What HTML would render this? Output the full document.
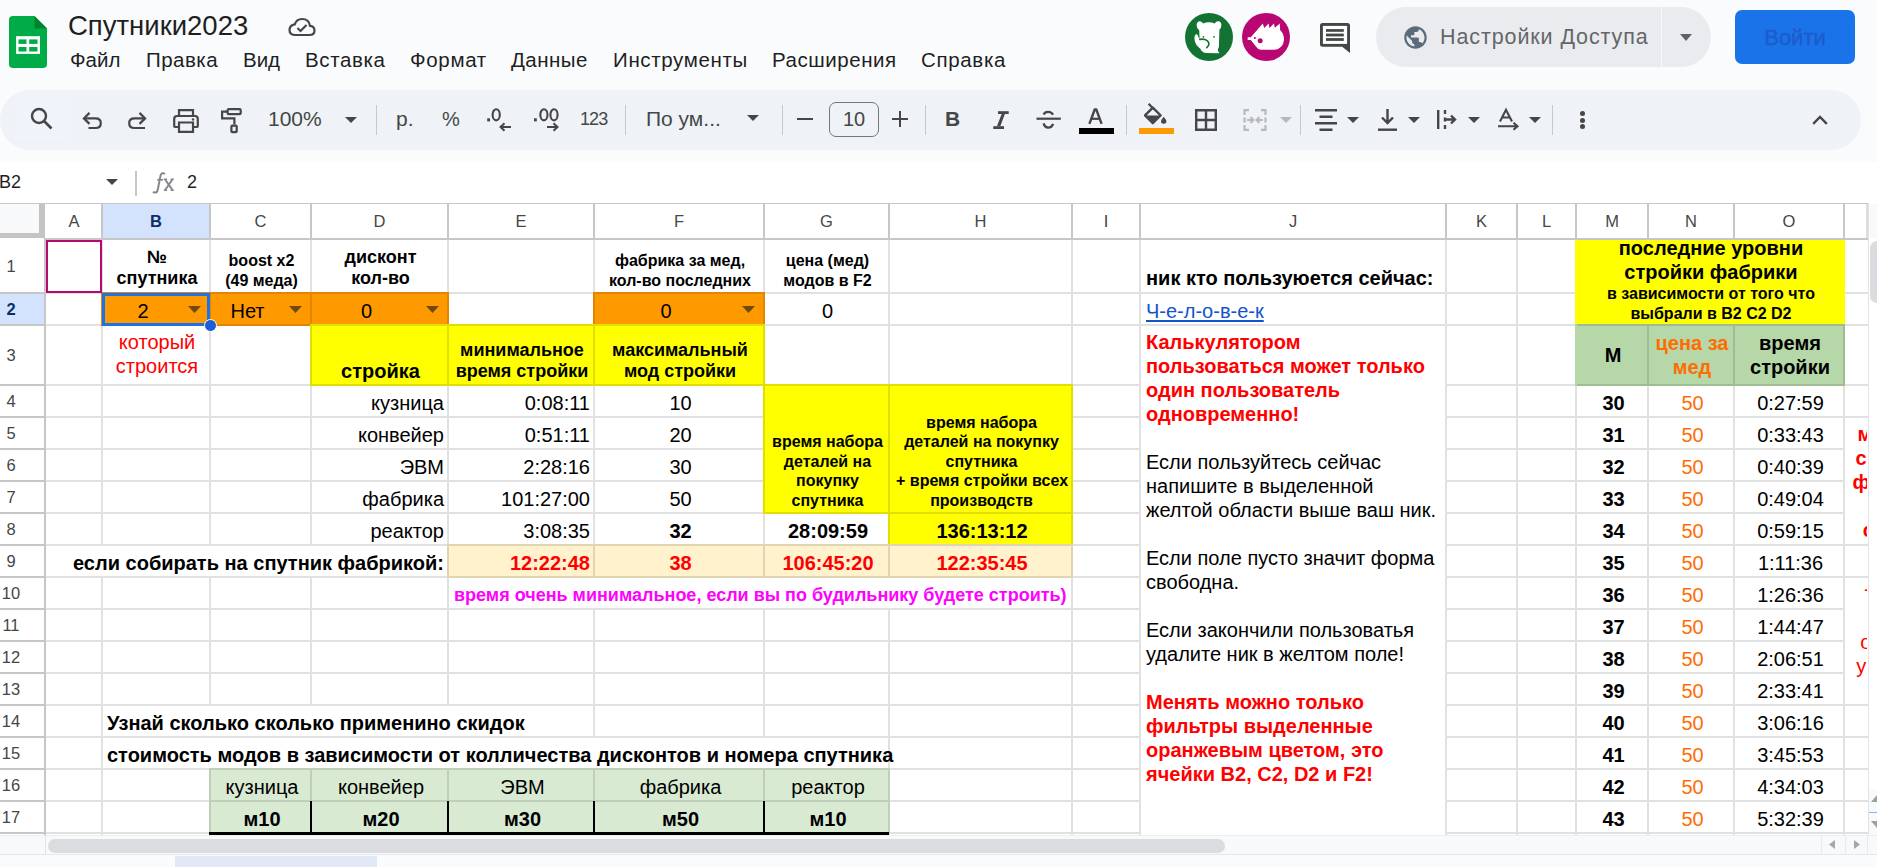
<!DOCTYPE html><html><head><meta charset="utf-8"><style>
html,body{margin:0;padding:0;}body{width:1877px;height:867px;overflow:hidden;position:relative;background:#f9fbfd;font-family:"Liberation Sans",sans-serif;}
div,span{box-sizing:border-box;} svg{position:absolute;display:block;overflow:visible}
.mi{position:absolute;font-size:20.5px;color:#1f1f1f;line-height:24px;top:48px;white-space:nowrap}
.hl{position:absolute;background:#c6c6c6}
</style></head><body>
<svg style="left:9px;top:16px" width="38" height="52" viewBox="0 0 38 52">
<path d="M4 0 H25.5 L38 12.5 V48 Q38 52 34 52 H4 Q0 52 0 48 V4 Q0 0 4 0 Z" fill="#00ac47"/>
<path d="M25.5 0 L38 12.5 H25.5 Z" fill="#00832d"/>
<rect x="7.1" y="20.2" width="23.9" height="17.7" fill="#fff"/>
<rect x="9.5" y="23.4" width="8" height="4.5" fill="#00ac47"/>
<rect x="20.2" y="23.4" width="8.3" height="4.5" fill="#00ac47"/>
<rect x="9.5" y="31" width="8" height="4.5" fill="#00ac47"/>
<rect x="20.2" y="31" width="8.3" height="4.5" fill="#00ac47"/>
</svg>
<div style="position:absolute;left:68px;top:10px;font-size:27.5px;line-height:32px;color:#1f1f1f;white-space:nowrap">Спутники2023</div>
<svg style="left:288px;top:16px" width="28" height="22" viewBox="0 0 28 22">
<path d="M7.5 19 H21.5 Q26.5 19 26.5 14.5 Q26.5 10.3 22 9.8 Q21 3 14 3 Q8.5 3 6.8 8.3 Q1.5 9.3 1.5 14 Q1.5 19 7.5 19 Z" fill="none" stroke="#444746" stroke-width="2.2"/>
<path d="M9.5 12 L12.5 15 L18.5 9" fill="none" stroke="#444746" stroke-width="2.2"/>
</svg>
<div class="mi" style="left:70px;letter-spacing:0px">Файл</div>
<div class="mi" style="left:146px;letter-spacing:0.47px">Правка</div>
<div class="mi" style="left:243px;letter-spacing:0px">Вид</div>
<div class="mi" style="left:305px;letter-spacing:0.63px">Вставка</div>
<div class="mi" style="left:410px;letter-spacing:0.67px">Формат</div>
<div class="mi" style="left:511px;letter-spacing:0.45px">Данные</div>
<div class="mi" style="left:613px;letter-spacing:0.65px">Инструменты</div>
<div class="mi" style="left:772px;letter-spacing:0.55px">Расширения</div>
<div class="mi" style="left:921px;letter-spacing:0.66px">Справка</div>
<svg style="left:1185px;top:13px" width="48" height="48" viewBox="0 0 48 48">
<circle cx="24" cy="24" r="24" fill="#137333"/>
<path d="M21.5 40 Q17 39.8 15.2 35.5 Q10.2 32 9.5 26.5 Q9.2 21.8 11.3 21.2 Q12.6 21 13.2 23.5 Q13.8 25.5 14.6 25.6 L14.2 17.2 Q11.5 15.5 11.6 12 Q12 8.2 15 8.3 Q17.2 8.5 18 10.6 Q24 8 29.8 10.6 Q30.8 8.3 33.2 8.3 Q36.3 8.5 36.4 12 Q36.4 15.2 34.4 16.5 L33.9 34 Q32.3 36.5 33 38 L34.4 40.2 Z" fill="#fff"/>
<path d="M14.8 26.4 Q19 25.3 22.2 27.6 Q25.8 30.8 21.8 34.6" fill="none" stroke="#137333" stroke-width="1.7" stroke-linecap="round"/>
<circle cx="18.5" cy="23.8" r="0.9" fill="#137333"/><circle cx="29" cy="23.8" r="0.9" fill="#137333"/>
</svg>
<svg style="left:1242px;top:13px" width="48" height="48" viewBox="0 0 48 48">
<circle cx="24" cy="24" r="24" fill="#b80672"/>
<path d="M5.7 24.2 L8.8 24.2 L20.8 10.5 L22.2 15 L26.6 10.4 L27.5 15 L31.9 10.4 L32.8 14.8 L37.8 10.4 L38.1 17 Q42 20.5 42 26.5 Q41.5 33.5 36 36 Q35 36.8 31 36.8 L19 36.8 Q16 36.8 14.4 34 L8.8 27 L5.7 27 Z" fill="#fff"/>
<circle cx="18.2" cy="27.8" r="2.5" fill="#b80672"/><circle cx="12.9" cy="25" r="1" fill="#b80672"/>
</svg>
<svg style="left:1319px;top:22px" width="32" height="32" viewBox="0 0 32 32">
<path d="M3.5 1 H28.5 Q31 1 31 3.5 V31 L23.2 24.8 H3.5 Q1 24.8 1 22.3 V3.5 Q1 1 3.5 1 Z" fill="#444746"/>
<rect x="3.9" y="3.9" width="24.2" height="18" fill="#ffffff"/>
<rect x="7" y="7.1" width="17.8" height="2.7" fill="#444746"/><rect x="7" y="11.6" width="17.8" height="2.8" fill="#444746"/><rect x="7" y="16.1" width="17.8" height="2.8" fill="#444746"/>
</svg>
<div style="position:absolute;left:1376px;top:7px;width:335px;height:60px;border-radius:30px;background:#eaebee"></div>
<div style="position:absolute;left:1661px;top:7px;width:1px;height:60px;background:#f6f7f9"></div>
<svg style="left:1401.7px;top:23.7px" width="27" height="27" viewBox="0 0 24 24">
<path d="M12 2C6.48 2 2 6.48 2 12s4.48 10 10 10 10-4.48 10-10S17.52 2 12 2zm-1 17.93c-3.95-.49-7-3.85-7-7.93 0-.62.08-1.21.21-1.79L9 15v1c0 1.1.9 2 2 2v1.93zm6.9-2.54c-.26-.81-1-1.39-1.9-1.39h-1v-3c0-.55-.45-1-1-1H8v-2h2c.55 0 1-.45 1-1V7h2c1.1 0 2-.9 2-2v-.41c2.93 1.19 5 4.06 5 7.41 0 2.08-.8 3.97-2.1 5.39z" fill="#5c6b7a"/>
</svg>
<div style="position:absolute;left:1440px;top:24px;font-size:21.5px;line-height:26px;letter-spacing:0.9px;color:#646669;white-space:nowrap">Настройки Доступа</div>
<svg style="left:1680px;top:34px" width="12" height="7" viewBox="0 0 12 7"><path d="M0 0 H12 L6 7 Z" fill="#5f6368"/></svg>
<div style="position:absolute;left:1735px;top:10px;width:120px;height:54px;border-radius:7px;background:#1a73e8"></div>
<div style="position:absolute;left:1735px;top:25px;width:120px;text-align:center;font-size:22px;font-weight:400;line-height:26px;color:#1d5ccc;-webkit-text-stroke:0.35px #1d5ccc;white-space:nowrap">Войти</div>
<div style="position:absolute;left:0px;top:90px;width:1861px;height:60px;border-radius:30px;background:#eff2f7"></div>
<div style="position:absolute;left:15px;top:98px;width:56px;height:42px;background:#f0f3f9"></div>
<svg style="left:30px;top:107px" width="23" height="23" viewBox="0 0 23 23"><circle cx="9" cy="9" r="7" fill="none" stroke="#444746" stroke-width="2.4"/><path d="M14 14 L21.5 21.5" stroke="#444746" stroke-width="2.6"/></svg>
<svg style="left:82px;top:111px" width="20" height="19" viewBox="0 0 20 19"><path d="M7.5 1.9 L1.9 7.4 L7.5 12.9" fill="none" stroke="#444746" stroke-width="2.2"/><path d="M2 7.4 H13.5 Q18.8 7.4 18.8 12.2 Q18.8 17 13.5 17 H6.5" fill="none" stroke="#444746" stroke-width="2.2"/></svg>
<svg style="left:128px;top:111px" width="20" height="19" viewBox="0 0 20 19"><path d="M11.5 1.9 L17.1 7.4 L11.5 12.9" fill="none" stroke="#444746" stroke-width="2.2"/><path d="M17 7.4 H6.5 Q1.2 7.4 1.2 12.2 Q1.2 17 6.5 17 H17" fill="none" stroke="#444746" stroke-width="2.2"/></svg>
<svg style="left:173px;top:109px" width="26" height="24" viewBox="0 0 26 24"><path d="M6 7 V1.2 H20 V7" fill="none" stroke="#444746" stroke-width="2.2"/><path d="M6 18 H2 Q1.2 18 1.2 17 V10 Q1.2 7 4 7 H22 Q24.8 7 24.8 10 V17 Q24.8 18 24 18 H20" fill="none" stroke="#444746" stroke-width="2.2"/><path d="M6 13.5 H20 V22.8 H6 Z" fill="none" stroke="#444746" stroke-width="2.2"/><circle cx="20" cy="10.5" r="1.2" fill="#444746"/></svg>
<svg style="left:219px;top:107px" width="24" height="27" viewBox="0 0 24 27"><rect x="8.6" y="2.1" width="13.1" height="5.1" rx="1.2" fill="none" stroke="#444746" stroke-width="2.2"/><path d="M8.6 4.6 H3.1 V11.3 H15.4 V17.5" fill="none" stroke="#444746" stroke-width="2.2"/><rect x="12.4" y="18.6" width="5.3" height="6.6" rx="1" fill="none" stroke="#444746" stroke-width="2.2"/></svg>
<div style="position:absolute;left:268px;top:106px;font-size:21px;line-height:26px;color:#444746;white-space:nowrap">100%</div>
<svg style="left:345px;top:117px" width="12" height="6" viewBox="0 0 12 6"><path d="M0 0 H12 L6.0 6 Z" fill="#444746"/></svg>
<div style="position:absolute;left:376px;top:105px;width:1px;height:30px;background:#c7c7c7"></div>
<div style="position:absolute;left:396px;top:106px;font-size:21px;line-height:26px;color:#444746;white-space:nowrap">р.</div>
<div style="position:absolute;left:442px;top:106px;font-size:20px;line-height:26px;color:#444746;white-space:nowrap">%</div>
<svg style="left:486px;top:107px" width="16" height="16" viewBox="0 0 16 16"><rect x="1.2" y="11.3" width="2.8" height="3.1" fill="#444746"/><ellipse cx="10.2" cy="7.8" rx="3.6" ry="5.6" fill="none" stroke="#444746" stroke-width="2.1"/></svg>
<svg style="left:498px;top:122px" width="14" height="10" viewBox="0 0 14 10"><path d="M13 5 H3 M6.5 1.2 L2.5 5 L6.5 8.8" fill="none" stroke="#444746" stroke-width="2"/></svg>
<svg style="left:533px;top:107px" width="26" height="16" viewBox="0 0 26 16"><rect x="1" y="11.3" width="2.8" height="3.1" fill="#444746"/><ellipse cx="10.9" cy="7.8" rx="3.6" ry="5.6" fill="none" stroke="#444746" stroke-width="2.1"/><ellipse cx="21" cy="7.8" rx="3.6" ry="5.6" fill="none" stroke="#444746" stroke-width="2.1"/></svg>
<svg style="left:546px;top:122px" width="14" height="10" viewBox="0 0 14 10"><path d="M1 5 H11 M7.5 1.2 L11.5 5 L7.5 8.8" fill="none" stroke="#444746" stroke-width="2"/></svg>
<div style="position:absolute;left:580px;top:106px;font-size:18px;line-height:26px;color:#444746;white-space:nowrap;letter-spacing:-0.9px">123</div>
<div style="position:absolute;left:625px;top:105px;width:1px;height:30px;background:#c7c7c7"></div>
<div style="position:absolute;left:646px;top:106px;font-size:21px;line-height:26px;color:#444746;white-space:nowrap">По ум...</div>
<svg style="left:747px;top:115px" width="12" height="6" viewBox="0 0 12 6"><path d="M0 0 H12 L6.0 6 Z" fill="#444746"/></svg>
<div style="position:absolute;left:782px;top:105px;width:1px;height:30px;background:#c7c7c7"></div>
<div style="position:absolute;left:797px;top:118px;width:16px;height:2.4px;background:#444746"></div>
<div style="position:absolute;left:829px;top:102px;width:50px;height:35px;border:1.3px solid #747775;border-radius:7px"></div>
<div style="position:absolute;left:829px;top:106px;width:50px;text-align:center;font-size:20px;line-height:26px;color:#444746;white-space:nowrap">10</div>
<div style="position:absolute;left:892px;top:118px;width:16px;height:2.4px;background:#444746"></div>
<div style="position:absolute;left:898.8px;top:111px;width:2.4px;height:16px;background:#444746"></div>
<div style="position:absolute;left:925px;top:105px;width:1px;height:30px;background:#c7c7c7"></div>
<div style="position:absolute;left:945px;top:106px;font-size:21px;font-weight:700;line-height:26px;color:#444746;white-space:nowrap">B</div>
<svg style="left:992px;top:110px" width="18" height="20" viewBox="0 0 18 20"><rect x="6" y="1.2" width="10.7" height="2.8" fill="#444746"/><rect x="1.3" y="16.2" width="10.7" height="2.8" fill="#444746"/><path d="M9.6 3.9 L12.9 3.9 L8.3 16.3 L5 16.3 Z" fill="#444746"/></svg>
<svg style="left:1035px;top:110px" width="27" height="19" viewBox="0 0 27 19"><path d="M1.5 8.7 H25.8" stroke="#444746" stroke-width="2.2"/><path d="M18 4.8 Q16.5 1.9 13.2 1.9 Q9.8 1.9 8.6 4.6" fill="none" stroke="#444746" stroke-width="2.4"/><path d="M8.6 13.4 Q9.8 17.6 13.2 17.6 Q16.8 17.6 18 13.8" fill="none" stroke="#444746" stroke-width="2.4"/></svg>
<svg style="left:1088px;top:108px" width="15" height="16" viewBox="0 0 15 16"><path d="M1.4 15.8 L6.7 1.5 H8.3 L13.6 15.8" fill="none" stroke="#444746" stroke-width="2.4" stroke-linejoin="round"/><path d="M3.8 10.8 H11.2" stroke="#444746" stroke-width="2.2"/></svg>
<div style="position:absolute;left:1079px;top:128px;width:35px;height:6px;background:#000;"></div>
<div style="position:absolute;left:1126px;top:105px;width:1px;height:30px;background:#c7c7c7"></div>
<svg style="left:1144px;top:103px" width="24" height="22" viewBox="0 0 24 22"><path d="M4.6 0.8 L9.5 5.7" stroke="#444746" stroke-width="2.3"/><path d="M8.8 4.6 L16.6 12.4 L8.8 20.2 L1 12.4 Z" fill="none" stroke="#444746" stroke-width="2.3" stroke-linejoin="round"/><path d="M2 12.4 H15.6 L8.8 19.2 Z" fill="#444746"/><path d="M19.7 13.8 Q22.4 17 22.4 18.6 Q22.4 20.8 19.7 20.8 Q17 20.8 17 18.6 Q17 17 19.7 13.8 Z" fill="#444746"/></svg>
<div style="position:absolute;left:1139px;top:128px;width:35px;height:6px;background:#ff9900;"></div>
<svg style="left:1195px;top:109px" width="22" height="22" viewBox="0 0 22 22"><path d="M1.2 1.2 H20.8 V20.8 H1.2 Z M11 1.2 V20.8 M1.2 11 H20.8" fill="none" stroke="#444746" stroke-width="2.4"/></svg>
<svg style="left:1243px;top:109px" width="24" height="22" viewBox="0 0 24 22"><path d="M1.5 6 V1.2 H6 M1.5 16 V20.8 H6 M22.5 6 V1.2 H18 M22.5 16 V20.8 H18" fill="none" stroke="#b7b9bb" stroke-width="2.2"/><path d="M1.5 8.5 V13.5 M22.5 8.5 V13.5" stroke="#b7b9bb" stroke-width="2.2"/><path d="M4 11 H10 M7.5 8 L10.5 11 L7.5 14 M20 11 H14 M16.5 8 L13.5 11 L16.5 14" fill="none" stroke="#b7b9bb" stroke-width="2"/></svg>
<svg style="left:1280px;top:117px" width="12" height="6" viewBox="0 0 12 6"><path d="M0 0 H12 L6.0 6 Z" fill="#b7b9bb"/></svg>
<div style="position:absolute;left:1300px;top:105px;width:1px;height:30px;background:#c7c7c7"></div>
<svg style="left:1315px;top:109px" width="22" height="22" viewBox="0 0 22 22"><path d="M0 1.2 H22 M4.5 7.7 H17.5 M0 14.2 H22 M4.5 20.7 H17.5" stroke="#444746" stroke-width="2.4"/></svg>
<svg style="left:1347px;top:117px" width="12" height="6" viewBox="0 0 12 6"><path d="M0 0 H12 L6.0 6 Z" fill="#444746"/></svg>
<svg style="left:1378px;top:109px" width="19" height="22" viewBox="0 0 19 22"><path d="M9.5 0 V14 M4 8.5 L9.5 14 L15 8.5" fill="none" stroke="#444746" stroke-width="2.4"/><path d="M0 20.7 H19" stroke="#444746" stroke-width="2.4"/></svg>
<svg style="left:1408px;top:117px" width="12" height="6" viewBox="0 0 12 6"><path d="M0 0 H12 L6.0 6 Z" fill="#444746"/></svg>
<svg style="left:1437px;top:110px" width="20" height="19" viewBox="0 0 20 19"><path d="M1.2 0 V19 M8 0 V4 M8 7.5 V11.5 M8 15 V19" stroke="#444746" stroke-width="2.4"/><path d="M8 9.5 H18 M14 5.5 L18 9.5 L14 13.5" fill="none" stroke="#444746" stroke-width="2.4"/></svg>
<svg style="left:1468px;top:117px" width="12" height="6" viewBox="0 0 12 6"><path d="M0 0 H12 L6.0 6 Z" fill="#444746"/></svg>
<svg style="left:1498px;top:109px" width="22" height="22" viewBox="0 0 22 22"><path d="M2 12.5 L8 0.8 L14 12.5 M4.2 8.5 H11.8" fill="none" stroke="#444746" stroke-width="2.1"/><path d="M0 17.3 H19 M15.5 13.8 L19.5 17.3 L15.5 20.8" fill="none" stroke="#444746" stroke-width="2.1"/></svg>
<svg style="left:1529px;top:117px" width="12" height="6" viewBox="0 0 12 6"><path d="M0 0 H12 L6.0 6 Z" fill="#444746"/></svg>
<div style="position:absolute;left:1552px;top:105px;width:1px;height:30px;background:#c7c7c7"></div>
<div style="position:absolute;left:1579.5px;top:110.5px;width:5px;height:5px;border-radius:50%;background:#444746"></div>
<div style="position:absolute;left:1579.5px;top:117.5px;width:5px;height:5px;border-radius:50%;background:#444746"></div>
<div style="position:absolute;left:1579.5px;top:124.0px;width:5px;height:5px;border-radius:50%;background:#444746"></div>
<svg style="left:1812px;top:115px" width="16" height="10" viewBox="0 0 16 10"><path d="M1.2 8.8 L8 2 L14.8 8.8" fill="none" stroke="#444746" stroke-width="2.4"/></svg>
<div style="position:absolute;left:0px;top:162px;width:1877px;height:693px;background:#ffffff;"></div>
<div style="position:absolute;left:-1px;top:169px;font-size:18px;line-height:26px;color:#1f1f1f;white-space:nowrap">B2</div>
<svg style="left:106px;top:179px" width="12" height="6" viewBox="0 0 12 6"><path d="M0 0 H12 L6.0 6 Z" fill="#444746"/></svg>
<div style="position:absolute;left:135px;top:171px;width:2px;height:25px;background:#c7c7c7"></div>
<svg style="left:152px;top:172px" width="23" height="22" viewBox="0 0 23 22"><path d="M12.8 2.2 Q11.8 0.9 10.2 1.3 Q8.7 1.9 8.3 4.5 L5.7 18 Q5.1 20.8 2.9 20.6 Q1.7 20.5 1.1 19.6" fill="none" stroke="#85898d" stroke-width="2"/><path d="M5.2 7.8 H11" stroke="#85898d" stroke-width="1.7"/><path d="M13 7.3 L20.6 18.2 M20.6 7.3 L13 18.2" stroke="#85898d" stroke-width="2"/><path d="M11.8 7.3 H15 M18.6 7.3 H21.8 M11.8 18.2 H15 M18.6 18.2 H21.8" stroke="#85898d" stroke-width="1.5"/></svg>
<div style="position:absolute;left:187px;top:169px;font-size:18px;line-height:26px;color:#1f1f1f;white-space:nowrap">2</div>
<div style="position:absolute;left:0px;top:203px;width:1868px;height:1px;background:#c7c7c7;"></div>
<div style="position:absolute;left:0px;top:204px;width:39px;height:29px;background:#f8f9fa;"></div>
<div style="position:absolute;left:39px;top:204px;width:6px;height:34px;background:#c4c4c4;"></div>
<div style="position:absolute;left:0px;top:233px;width:45px;height:5px;background:#c4c4c4;"></div>
<div style="position:absolute;left:103px;top:204px;width:106px;height:34px;background:#d3e3fd;"></div>
<div style="position:absolute;left:45px;top:238px;width:1823px;height:2px;background:#c7c7c7;"></div>
<div style="position:absolute;left:0px;top:294px;width:44px;height:30px;background:#d3e3fd;"></div>
<div style="position:absolute;left:44px;top:238px;width:2px;height:597px;background:#c7c7c7;"></div>
<div style="position:absolute;left:101px;top:204px;width:2px;height:34px;background:#c7c7c7;"></div>
<div style="position:absolute;left:209px;top:204px;width:2px;height:34px;background:#c7c7c7;"></div>
<div style="position:absolute;left:310px;top:204px;width:2px;height:34px;background:#c7c7c7;"></div>
<div style="position:absolute;left:447px;top:204px;width:2px;height:34px;background:#c7c7c7;"></div>
<div style="position:absolute;left:593px;top:204px;width:2px;height:34px;background:#c7c7c7;"></div>
<div style="position:absolute;left:763px;top:204px;width:2px;height:34px;background:#c7c7c7;"></div>
<div style="position:absolute;left:888px;top:204px;width:2px;height:34px;background:#c7c7c7;"></div>
<div style="position:absolute;left:1071px;top:204px;width:2px;height:34px;background:#c7c7c7;"></div>
<div style="position:absolute;left:1139px;top:204px;width:2px;height:34px;background:#c7c7c7;"></div>
<div style="position:absolute;left:1445px;top:204px;width:2px;height:34px;background:#c7c7c7;"></div>
<div style="position:absolute;left:1516px;top:204px;width:2px;height:34px;background:#c7c7c7;"></div>
<div style="position:absolute;left:1575px;top:204px;width:2px;height:34px;background:#c7c7c7;"></div>
<div style="position:absolute;left:1647px;top:204px;width:2px;height:34px;background:#c7c7c7;"></div>
<div style="position:absolute;left:1733px;top:204px;width:2px;height:34px;background:#c7c7c7;"></div>
<div style="position:absolute;left:1843px;top:204px;width:2px;height:34px;background:#c7c7c7;"></div>
<div style="position:absolute;left:1866px;top:204px;width:2px;height:34px;background:#dadce0;"></div>
<div style="position:absolute;left:47px;top:208px;width:54px;text-align:center;font-size:16.5px;font-weight:400;line-height:26px;color:#444746">A</div>
<div style="position:absolute;left:103px;top:208px;width:106px;text-align:center;font-size:16.5px;font-weight:700;line-height:26px;color:#0b2e6b">B</div>
<div style="position:absolute;left:211px;top:208px;width:99px;text-align:center;font-size:16.5px;font-weight:400;line-height:26px;color:#444746">C</div>
<div style="position:absolute;left:312px;top:208px;width:135px;text-align:center;font-size:16.5px;font-weight:400;line-height:26px;color:#444746">D</div>
<div style="position:absolute;left:449px;top:208px;width:144px;text-align:center;font-size:16.5px;font-weight:400;line-height:26px;color:#444746">E</div>
<div style="position:absolute;left:595px;top:208px;width:168px;text-align:center;font-size:16.5px;font-weight:400;line-height:26px;color:#444746">F</div>
<div style="position:absolute;left:765px;top:208px;width:123px;text-align:center;font-size:16.5px;font-weight:400;line-height:26px;color:#444746">G</div>
<div style="position:absolute;left:890px;top:208px;width:181px;text-align:center;font-size:16.5px;font-weight:400;line-height:26px;color:#444746">H</div>
<div style="position:absolute;left:1073px;top:208px;width:66px;text-align:center;font-size:16.5px;font-weight:400;line-height:26px;color:#444746">I</div>
<div style="position:absolute;left:1141px;top:208px;width:304px;text-align:center;font-size:16.5px;font-weight:400;line-height:26px;color:#444746">J</div>
<div style="position:absolute;left:1447px;top:208px;width:69px;text-align:center;font-size:16.5px;font-weight:400;line-height:26px;color:#444746">K</div>
<div style="position:absolute;left:1518px;top:208px;width:57px;text-align:center;font-size:16.5px;font-weight:400;line-height:26px;color:#444746">L</div>
<div style="position:absolute;left:1577px;top:208px;width:70px;text-align:center;font-size:16.5px;font-weight:400;line-height:26px;color:#444746">M</div>
<div style="position:absolute;left:1649px;top:208px;width:84px;text-align:center;font-size:16.5px;font-weight:400;line-height:26px;color:#444746">N</div>
<div style="position:absolute;left:1735px;top:208px;width:108px;text-align:center;font-size:16.5px;font-weight:400;line-height:26px;color:#444746">O</div>
<div style="position:absolute;left:0px;top:292px;width:44px;height:2px;background:#c7c7c7;"></div>
<div style="position:absolute;left:0px;top:240px;width:22px;height:52px;display:flex;align-items:center;justify-content:center;font-size:16.5px;font-weight:400;color:#444746">1</div>
<div style="position:absolute;left:0px;top:324px;width:44px;height:2px;background:#c7c7c7;"></div>
<div style="position:absolute;left:0px;top:294px;width:22px;height:30px;display:flex;align-items:center;justify-content:center;font-size:16.5px;font-weight:700;color:#0b2e6b">2</div>
<div style="position:absolute;left:0px;top:384px;width:44px;height:2px;background:#c7c7c7;"></div>
<div style="position:absolute;left:0px;top:326px;width:22px;height:58px;display:flex;align-items:center;justify-content:center;font-size:16.5px;font-weight:400;color:#444746">3</div>
<div style="position:absolute;left:0px;top:416px;width:44px;height:2px;background:#c7c7c7;"></div>
<div style="position:absolute;left:0px;top:386px;width:22px;height:30px;display:flex;align-items:center;justify-content:center;font-size:16.5px;font-weight:400;color:#444746">4</div>
<div style="position:absolute;left:0px;top:448px;width:44px;height:2px;background:#c7c7c7;"></div>
<div style="position:absolute;left:0px;top:418px;width:22px;height:30px;display:flex;align-items:center;justify-content:center;font-size:16.5px;font-weight:400;color:#444746">5</div>
<div style="position:absolute;left:0px;top:480px;width:44px;height:2px;background:#c7c7c7;"></div>
<div style="position:absolute;left:0px;top:450px;width:22px;height:30px;display:flex;align-items:center;justify-content:center;font-size:16.5px;font-weight:400;color:#444746">6</div>
<div style="position:absolute;left:0px;top:512px;width:44px;height:2px;background:#c7c7c7;"></div>
<div style="position:absolute;left:0px;top:482px;width:22px;height:30px;display:flex;align-items:center;justify-content:center;font-size:16.5px;font-weight:400;color:#444746">7</div>
<div style="position:absolute;left:0px;top:544px;width:44px;height:2px;background:#c7c7c7;"></div>
<div style="position:absolute;left:0px;top:514px;width:22px;height:30px;display:flex;align-items:center;justify-content:center;font-size:16.5px;font-weight:400;color:#444746">8</div>
<div style="position:absolute;left:0px;top:576px;width:44px;height:2px;background:#c7c7c7;"></div>
<div style="position:absolute;left:0px;top:546px;width:22px;height:30px;display:flex;align-items:center;justify-content:center;font-size:16.5px;font-weight:400;color:#444746">9</div>
<div style="position:absolute;left:0px;top:608px;width:44px;height:2px;background:#c7c7c7;"></div>
<div style="position:absolute;left:0px;top:578px;width:22px;height:30px;display:flex;align-items:center;justify-content:center;font-size:16.5px;font-weight:400;color:#444746">10</div>
<div style="position:absolute;left:0px;top:640px;width:44px;height:2px;background:#c7c7c7;"></div>
<div style="position:absolute;left:0px;top:610px;width:22px;height:30px;display:flex;align-items:center;justify-content:center;font-size:16.5px;font-weight:400;color:#444746">11</div>
<div style="position:absolute;left:0px;top:672px;width:44px;height:2px;background:#c7c7c7;"></div>
<div style="position:absolute;left:0px;top:642px;width:22px;height:30px;display:flex;align-items:center;justify-content:center;font-size:16.5px;font-weight:400;color:#444746">12</div>
<div style="position:absolute;left:0px;top:704px;width:44px;height:2px;background:#c7c7c7;"></div>
<div style="position:absolute;left:0px;top:674px;width:22px;height:30px;display:flex;align-items:center;justify-content:center;font-size:16.5px;font-weight:400;color:#444746">13</div>
<div style="position:absolute;left:0px;top:736px;width:44px;height:2px;background:#c7c7c7;"></div>
<div style="position:absolute;left:0px;top:706px;width:22px;height:30px;display:flex;align-items:center;justify-content:center;font-size:16.5px;font-weight:400;color:#444746">14</div>
<div style="position:absolute;left:0px;top:768px;width:44px;height:2px;background:#c7c7c7;"></div>
<div style="position:absolute;left:0px;top:738px;width:22px;height:30px;display:flex;align-items:center;justify-content:center;font-size:16.5px;font-weight:400;color:#444746">15</div>
<div style="position:absolute;left:0px;top:800px;width:44px;height:2px;background:#c7c7c7;"></div>
<div style="position:absolute;left:0px;top:770px;width:22px;height:30px;display:flex;align-items:center;justify-content:center;font-size:16.5px;font-weight:400;color:#444746">16</div>
<div style="position:absolute;left:0px;top:832px;width:44px;height:2px;background:#c7c7c7;"></div>
<div style="position:absolute;left:0px;top:802px;width:22px;height:30px;display:flex;align-items:center;justify-content:center;font-size:16.5px;font-weight:400;color:#444746">17</div>
<div style="position:absolute;left:101px;top:240px;width:2px;height:595px;background:#e1e1e1;"></div>
<div style="position:absolute;left:209px;top:240px;width:2px;height:595px;background:#e1e1e1;"></div>
<div style="position:absolute;left:310px;top:240px;width:2px;height:595px;background:#e1e1e1;"></div>
<div style="position:absolute;left:447px;top:240px;width:2px;height:595px;background:#e1e1e1;"></div>
<div style="position:absolute;left:593px;top:240px;width:2px;height:595px;background:#e1e1e1;"></div>
<div style="position:absolute;left:763px;top:240px;width:2px;height:595px;background:#e1e1e1;"></div>
<div style="position:absolute;left:888px;top:240px;width:2px;height:595px;background:#e1e1e1;"></div>
<div style="position:absolute;left:1071px;top:240px;width:2px;height:595px;background:#e1e1e1;"></div>
<div style="position:absolute;left:1139px;top:240px;width:2px;height:595px;background:#e1e1e1;"></div>
<div style="position:absolute;left:1445px;top:240px;width:2px;height:595px;background:#e1e1e1;"></div>
<div style="position:absolute;left:1516px;top:240px;width:2px;height:595px;background:#e1e1e1;"></div>
<div style="position:absolute;left:1575px;top:240px;width:2px;height:595px;background:#e1e1e1;"></div>
<div style="position:absolute;left:1647px;top:240px;width:2px;height:595px;background:#e1e1e1;"></div>
<div style="position:absolute;left:1733px;top:240px;width:2px;height:595px;background:#e1e1e1;"></div>
<div style="position:absolute;left:1843px;top:240px;width:2px;height:595px;background:#e1e1e1;"></div>
<div style="position:absolute;left:46px;top:292px;width:1822px;height:2px;background:#e1e1e1;"></div>
<div style="position:absolute;left:46px;top:324px;width:1822px;height:2px;background:#e1e1e1;"></div>
<div style="position:absolute;left:46px;top:384px;width:1822px;height:2px;background:#e1e1e1;"></div>
<div style="position:absolute;left:46px;top:416px;width:1822px;height:2px;background:#e1e1e1;"></div>
<div style="position:absolute;left:46px;top:448px;width:1822px;height:2px;background:#e1e1e1;"></div>
<div style="position:absolute;left:46px;top:480px;width:1822px;height:2px;background:#e1e1e1;"></div>
<div style="position:absolute;left:46px;top:512px;width:1822px;height:2px;background:#e1e1e1;"></div>
<div style="position:absolute;left:46px;top:544px;width:1822px;height:2px;background:#e1e1e1;"></div>
<div style="position:absolute;left:46px;top:576px;width:1822px;height:2px;background:#e1e1e1;"></div>
<div style="position:absolute;left:46px;top:608px;width:1822px;height:2px;background:#e1e1e1;"></div>
<div style="position:absolute;left:46px;top:640px;width:1822px;height:2px;background:#e1e1e1;"></div>
<div style="position:absolute;left:46px;top:672px;width:1822px;height:2px;background:#e1e1e1;"></div>
<div style="position:absolute;left:46px;top:704px;width:1822px;height:2px;background:#e1e1e1;"></div>
<div style="position:absolute;left:46px;top:736px;width:1822px;height:2px;background:#e1e1e1;"></div>
<div style="position:absolute;left:46px;top:768px;width:1822px;height:2px;background:#e1e1e1;"></div>
<div style="position:absolute;left:46px;top:800px;width:1822px;height:2px;background:#e1e1e1;"></div>
<div style="position:absolute;left:46px;top:832px;width:1822px;height:2px;background:#e1e1e1;"></div>
<div style="position:absolute;left:101px;top:292px;width:348px;height:34px;background:#e08600;"></div>
<div style="position:absolute;left:103px;top:294px;width:344px;height:30px;background:#ff9900;"></div>
<div style="position:absolute;left:209px;top:292px;width:2px;height:34px;background:#e08600;"></div>
<div style="position:absolute;left:310px;top:292px;width:2px;height:34px;background:#e08600;"></div>
<div style="position:absolute;left:593px;top:292px;width:172px;height:34px;background:#e08600;"></div>
<div style="position:absolute;left:595px;top:294px;width:168px;height:30px;background:#ff9900;"></div>
<div style="position:absolute;left:310px;top:324px;width:455px;height:62px;background:#e0e000;"></div>
<div style="position:absolute;left:312px;top:326px;width:451px;height:58px;background:#ffff00;"></div>
<div style="position:absolute;left:447px;top:324px;width:2px;height:62px;background:#e0e000;"></div>
<div style="position:absolute;left:593px;top:324px;width:2px;height:62px;background:#e0e000;"></div>
<div style="position:absolute;left:763px;top:384px;width:310px;height:130px;background:#e0e000;"></div>
<div style="position:absolute;left:765px;top:386px;width:306px;height:126px;background:#ffff00;"></div>
<div style="position:absolute;left:888px;top:384px;width:2px;height:130px;background:#e0e000;"></div>
<div style="position:absolute;left:888px;top:512px;width:185px;height:34px;background:#e0e000;"></div>
<div style="position:absolute;left:890px;top:514px;width:181px;height:30px;background:#ffff00;"></div>
<div style="position:absolute;left:447px;top:544px;width:626px;height:34px;background:#e0d5b3;"></div>
<div style="position:absolute;left:449px;top:546px;width:622px;height:30px;background:#fff2cc;"></div>
<div style="position:absolute;left:593px;top:544px;width:2px;height:34px;background:#e0d5b3;"></div>
<div style="position:absolute;left:763px;top:544px;width:2px;height:34px;background:#e0d5b3;"></div>
<div style="position:absolute;left:888px;top:544px;width:2px;height:34px;background:#e0d5b3;"></div>
<div style="position:absolute;left:101px;top:546px;width:2px;height:30px;background:#ffffff;"></div>
<div style="position:absolute;left:209px;top:546px;width:2px;height:30px;background:#ffffff;"></div>
<div style="position:absolute;left:310px;top:546px;width:2px;height:30px;background:#ffffff;"></div>
<div style="position:absolute;left:593px;top:578px;width:2px;height:30px;background:#ffffff;"></div>
<div style="position:absolute;left:763px;top:578px;width:2px;height:30px;background:#ffffff;"></div>
<div style="position:absolute;left:888px;top:578px;width:2px;height:30px;background:#ffffff;"></div>
<div style="position:absolute;left:209px;top:706px;width:2px;height:30px;background:#ffffff;"></div>
<div style="position:absolute;left:310px;top:706px;width:2px;height:30px;background:#ffffff;"></div>
<div style="position:absolute;left:447px;top:706px;width:2px;height:30px;background:#ffffff;"></div>
<div style="position:absolute;left:209px;top:738px;width:2px;height:30px;background:#ffffff;"></div>
<div style="position:absolute;left:310px;top:738px;width:2px;height:30px;background:#ffffff;"></div>
<div style="position:absolute;left:447px;top:738px;width:2px;height:30px;background:#ffffff;"></div>
<div style="position:absolute;left:593px;top:738px;width:2px;height:30px;background:#ffffff;"></div>
<div style="position:absolute;left:763px;top:738px;width:2px;height:30px;background:#ffffff;"></div>
<div style="position:absolute;left:1141px;top:384px;width:304px;height:2px;background:#ffffff;"></div>
<div style="position:absolute;left:1141px;top:416px;width:304px;height:2px;background:#ffffff;"></div>
<div style="position:absolute;left:1141px;top:448px;width:304px;height:2px;background:#ffffff;"></div>
<div style="position:absolute;left:1141px;top:480px;width:304px;height:2px;background:#ffffff;"></div>
<div style="position:absolute;left:1141px;top:512px;width:304px;height:2px;background:#ffffff;"></div>
<div style="position:absolute;left:1141px;top:544px;width:304px;height:2px;background:#ffffff;"></div>
<div style="position:absolute;left:1141px;top:576px;width:304px;height:2px;background:#ffffff;"></div>
<div style="position:absolute;left:1141px;top:608px;width:304px;height:2px;background:#ffffff;"></div>
<div style="position:absolute;left:1141px;top:640px;width:304px;height:2px;background:#ffffff;"></div>
<div style="position:absolute;left:1141px;top:672px;width:304px;height:2px;background:#ffffff;"></div>
<div style="position:absolute;left:1141px;top:704px;width:304px;height:2px;background:#ffffff;"></div>
<div style="position:absolute;left:1141px;top:736px;width:304px;height:2px;background:#ffffff;"></div>
<div style="position:absolute;left:1141px;top:768px;width:304px;height:2px;background:#ffffff;"></div>
<div style="position:absolute;left:1141px;top:800px;width:304px;height:2px;background:#ffffff;"></div>
<div style="position:absolute;left:1141px;top:832px;width:304px;height:2px;background:#ffffff;"></div>
<div style="position:absolute;left:209px;top:768px;width:681px;height:66px;background:#bfcfb9;"></div>
<div style="position:absolute;left:211px;top:770px;width:677px;height:62px;background:#d9ead3;"></div>
<div style="position:absolute;left:310px;top:768px;width:2px;height:66px;background:#bfcfb9;"></div>
<div style="position:absolute;left:447px;top:768px;width:2px;height:66px;background:#bfcfb9;"></div>
<div style="position:absolute;left:593px;top:768px;width:2px;height:66px;background:#bfcfb9;"></div>
<div style="position:absolute;left:763px;top:768px;width:2px;height:66px;background:#bfcfb9;"></div>
<div style="position:absolute;left:209px;top:800px;width:681px;height:2px;background:#bfcfb9;"></div>
<div style="position:absolute;left:209px;top:832px;width:680px;height:3px;background:#000;"></div>
<div style="position:absolute;left:310px;top:801px;width:2px;height:34px;background:#000;"></div>
<div style="position:absolute;left:447px;top:801px;width:2px;height:34px;background:#000;"></div>
<div style="position:absolute;left:593px;top:801px;width:2px;height:34px;background:#000;"></div>
<div style="position:absolute;left:763px;top:801px;width:2px;height:34px;background:#000;"></div>
<div style="position:absolute;left:1575px;top:240px;width:270px;height:84px;background:#ffff00;"></div>
<div style="position:absolute;left:1575px;top:324px;width:270px;height:62px;background:#9fbd92;"></div>
<div style="position:absolute;left:1575px;top:326px;width:268px;height:58px;background:#b6d7a8;"></div>
<div style="position:absolute;left:1647px;top:324px;width:2px;height:62px;background:#9fbd92;"></div>
<div style="position:absolute;left:1733px;top:324px;width:2px;height:62px;background:#9fbd92;"></div>
<div style="position:absolute;left:1575px;top:324px;width:2px;height:62px;background:#b6d7a8;"></div>
<div style="position:absolute;left:1845px;top:448px;width:23px;height:2px;background:#ffffff;"></div>
<div style="position:absolute;left:1845px;top:480px;width:23px;height:2px;background:#ffffff;"></div>
<div style="position:absolute;left:1845px;top:512px;width:23px;height:2px;background:#ffffff;"></div>
<div style="position:absolute;left:1845px;top:608px;width:23px;height:2px;background:#ffffff;"></div>
<div style="position:absolute;left:1845px;top:640px;width:23px;height:2px;background:#ffffff;"></div>
<div style="position:absolute;left:1845px;top:672px;width:23px;height:2px;background:#ffffff;"></div>
<div style="position:absolute;left:46px;top:240px;width:56px;height:53px;border:2.5px solid #b80672"></div>
<div style="position:absolute;left:103px;top:240px;width:106px;height:52px;display:flex;flex-direction:column;justify-content:flex-end;text-align:center;font-size:18px;font-weight:700;color:#000;line-height:21px;padding:0px 4px 3px 6px;box-sizing:border-box;white-space:nowrap;"><div>№<br>спутника</div></div>
<div style="position:absolute;left:211px;top:240px;width:99px;height:52px;display:flex;flex-direction:column;justify-content:flex-end;text-align:center;font-size:16px;font-weight:700;color:#000;line-height:20px;padding:0px 4px 1px 6px;box-sizing:border-box;white-space:nowrap;"><div>boost x2<br>(49 меда)</div></div>
<div style="position:absolute;left:312px;top:240px;width:135px;height:52px;display:flex;flex-direction:column;justify-content:flex-end;text-align:center;font-size:18px;font-weight:700;color:#000;line-height:21px;padding:0px 4px 3px 6px;box-sizing:border-box;white-space:nowrap;"><div>дисконт<br>кол-во</div></div>
<div style="position:absolute;left:595px;top:240px;width:168px;height:52px;display:flex;flex-direction:column;justify-content:flex-end;text-align:center;font-size:16px;font-weight:700;color:#000;line-height:20px;padding:0px 4px 1px 6px;box-sizing:border-box;white-space:nowrap;"><div>фабрика за мед,<br>кол-во последних</div></div>
<div style="position:absolute;left:765px;top:240px;width:123px;height:52px;display:flex;flex-direction:column;justify-content:flex-end;text-align:center;font-size:16px;font-weight:700;color:#000;line-height:20px;padding:0px 4px 1px 6px;box-sizing:border-box;white-space:nowrap;"><div>цена (мед)<br>модов в F2</div></div>
<div style="position:absolute;left:1141px;top:240px;width:304px;height:52px;display:flex;flex-direction:column;justify-content:flex-end;text-align:left;font-size:20px;font-weight:700;color:#000;line-height:24px;padding:0px 5px 2px 5px;box-sizing:border-box;white-space:nowrap;"><div>ник кто пользуюется сейчас:</div></div>
<div style="position:absolute;left:1577px;top:240px;width:266px;height:84px;display:flex;flex-direction:column;justify-content:center;text-align:center;font-size:20px;font-weight:700;color:#000;line-height:24px;padding:0px 4px 5px 6px;box-sizing:border-box;white-space:nowrap;"><div><div style="font-size:20px;line-height:24px">последние уровни<br>стройки фабрики</div><div style="font-size:16px;line-height:19.5px">в зависимости от того что<br>выбрали в B2 C2 D2</div></div></div>
<div style="position:absolute;left:103px;top:294px;width:78px;height:30px;display:flex;flex-direction:column;justify-content:flex-end;text-align:center;font-size:20px;font-weight:400;color:#000;line-height:24px;padding:0px 4px 1px 6px;box-sizing:border-box;white-space:nowrap;"><div>2</div></div>
<div style="position:absolute;left:211px;top:294px;width:71px;height:30px;display:flex;flex-direction:column;justify-content:flex-end;text-align:center;font-size:20px;font-weight:400;color:#000;line-height:24px;padding:0px 4px 1px 6px;box-sizing:border-box;white-space:nowrap;"><div>Нет</div></div>
<div style="position:absolute;left:312px;top:294px;width:107px;height:30px;display:flex;flex-direction:column;justify-content:flex-end;text-align:center;font-size:20px;font-weight:400;color:#000;line-height:24px;padding:0px 4px 1px 6px;box-sizing:border-box;white-space:nowrap;"><div>0</div></div>
<div style="position:absolute;left:595px;top:294px;width:140px;height:30px;display:flex;flex-direction:column;justify-content:flex-end;text-align:center;font-size:20px;font-weight:400;color:#000;line-height:24px;padding:0px 4px 1px 6px;box-sizing:border-box;white-space:nowrap;"><div>0</div></div>
<div style="position:absolute;left:765px;top:294px;width:123px;height:30px;display:flex;flex-direction:column;justify-content:flex-end;text-align:center;font-size:20px;font-weight:400;color:#000;line-height:24px;padding:0px 4px 1px 6px;box-sizing:border-box;white-space:nowrap;"><div>0</div></div>
<svg style="left:188px;top:306px" width="13" height="7" viewBox="0 0 13 7"><path d="M0 0 H13 L6.5 7 Z" fill="#6e4a12"/></svg>
<svg style="left:289px;top:306px" width="13" height="7" viewBox="0 0 13 7"><path d="M0 0 H13 L6.5 7 Z" fill="#6e4a12"/></svg>
<svg style="left:426px;top:306px" width="13" height="7" viewBox="0 0 13 7"><path d="M0 0 H13 L6.5 7 Z" fill="#6e4a12"/></svg>
<svg style="left:742px;top:306px" width="13" height="7" viewBox="0 0 13 7"><path d="M0 0 H13 L6.5 7 Z" fill="#6e4a12"/></svg>
<div style="position:absolute;left:1141px;top:294px;width:304px;height:30px;display:flex;flex-direction:column;justify-content:flex-end;text-align:left;font-size:20px;font-weight:400;color:#000;line-height:24px;padding:0px 5px 1px 5px;box-sizing:border-box;white-space:nowrap;"><div><span style="color:#1155cc;text-decoration:underline;text-underline-offset:2px">Ч-е-л-о-в-е-к</span></div></div>
<div style="position:absolute;left:103px;top:326px;width:106px;height:58px;display:flex;flex-direction:column;justify-content:center;text-align:center;font-size:20px;font-weight:400;color:#ff0000;line-height:24px;padding:0px 4px 2px 6px;box-sizing:border-box;white-space:nowrap;"><div>который<br>строится</div></div>
<div style="position:absolute;left:312px;top:326px;width:135px;height:58px;display:flex;flex-direction:column;justify-content:flex-end;text-align:center;font-size:20px;font-weight:700;color:#000;line-height:24px;padding:0px 4px 1px 6px;box-sizing:border-box;white-space:nowrap;"><div>стройка</div></div>
<div style="position:absolute;left:449px;top:326px;width:144px;height:58px;display:flex;flex-direction:column;justify-content:flex-end;text-align:center;font-size:18px;font-weight:700;color:#000;line-height:21px;padding:0px 4px 2px 6px;box-sizing:border-box;white-space:nowrap;"><div>минимальное<br>время стройки</div></div>
<div style="position:absolute;left:595px;top:326px;width:168px;height:58px;display:flex;flex-direction:column;justify-content:flex-end;text-align:center;font-size:18px;font-weight:700;color:#000;line-height:21px;padding:0px 4px 2px 6px;box-sizing:border-box;white-space:nowrap;"><div>максимальный<br>мод стройки</div></div>
<div style="position:absolute;left:1577px;top:326px;width:70px;height:58px;display:flex;flex-direction:column;justify-content:center;text-align:center;font-size:20px;font-weight:700;color:#000;line-height:24px;padding:0px 4px 0px 6px;box-sizing:border-box;white-space:nowrap;"><div>М</div></div>
<div style="position:absolute;left:1649px;top:326px;width:84px;height:58px;display:flex;flex-direction:column;justify-content:center;text-align:center;font-size:20px;font-weight:700;color:#ff6d01;line-height:24px;padding:0px 4px 0px 6px;box-sizing:border-box;white-space:nowrap;"><div>цена за<br>мед</div></div>
<div style="position:absolute;left:1735px;top:326px;width:108px;height:58px;display:flex;flex-direction:column;justify-content:center;text-align:center;font-size:20px;font-weight:700;color:#000;line-height:24px;padding:0px 4px 0px 6px;box-sizing:border-box;white-space:nowrap;"><div>время<br>стройки</div></div>
<div style="position:absolute;left:312px;top:386px;width:135px;height:30px;display:flex;flex-direction:column;justify-content:flex-end;text-align:right;font-size:20px;font-weight:400;color:#000;line-height:24px;padding:0px 3px 1px 4px;box-sizing:border-box;white-space:nowrap;"><div>кузница</div></div>
<div style="position:absolute;left:449px;top:386px;width:144px;height:30px;display:flex;flex-direction:column;justify-content:flex-end;text-align:right;font-size:20px;font-weight:400;color:#000;line-height:24px;padding:0px 3px 1px 4px;box-sizing:border-box;white-space:nowrap;"><div>0:08:11</div></div>
<div style="position:absolute;left:312px;top:418px;width:135px;height:30px;display:flex;flex-direction:column;justify-content:flex-end;text-align:right;font-size:20px;font-weight:400;color:#000;line-height:24px;padding:0px 3px 1px 4px;box-sizing:border-box;white-space:nowrap;"><div>конвейер</div></div>
<div style="position:absolute;left:449px;top:418px;width:144px;height:30px;display:flex;flex-direction:column;justify-content:flex-end;text-align:right;font-size:20px;font-weight:400;color:#000;line-height:24px;padding:0px 3px 1px 4px;box-sizing:border-box;white-space:nowrap;"><div>0:51:11</div></div>
<div style="position:absolute;left:312px;top:450px;width:135px;height:30px;display:flex;flex-direction:column;justify-content:flex-end;text-align:right;font-size:20px;font-weight:400;color:#000;line-height:24px;padding:0px 3px 1px 4px;box-sizing:border-box;white-space:nowrap;"><div>ЭВМ</div></div>
<div style="position:absolute;left:449px;top:450px;width:144px;height:30px;display:flex;flex-direction:column;justify-content:flex-end;text-align:right;font-size:20px;font-weight:400;color:#000;line-height:24px;padding:0px 3px 1px 4px;box-sizing:border-box;white-space:nowrap;"><div>2:28:16</div></div>
<div style="position:absolute;left:312px;top:482px;width:135px;height:30px;display:flex;flex-direction:column;justify-content:flex-end;text-align:right;font-size:20px;font-weight:400;color:#000;line-height:24px;padding:0px 3px 1px 4px;box-sizing:border-box;white-space:nowrap;"><div>фабрика</div></div>
<div style="position:absolute;left:449px;top:482px;width:144px;height:30px;display:flex;flex-direction:column;justify-content:flex-end;text-align:right;font-size:20px;font-weight:400;color:#000;line-height:24px;padding:0px 3px 1px 4px;box-sizing:border-box;white-space:nowrap;"><div>101:27:00</div></div>
<div style="position:absolute;left:312px;top:514px;width:135px;height:30px;display:flex;flex-direction:column;justify-content:flex-end;text-align:right;font-size:20px;font-weight:400;color:#000;line-height:24px;padding:0px 3px 1px 4px;box-sizing:border-box;white-space:nowrap;"><div>реактор</div></div>
<div style="position:absolute;left:449px;top:514px;width:144px;height:30px;display:flex;flex-direction:column;justify-content:flex-end;text-align:right;font-size:20px;font-weight:400;color:#000;line-height:24px;padding:0px 3px 1px 4px;box-sizing:border-box;white-space:nowrap;"><div>3:08:35</div></div>
<div style="position:absolute;left:595px;top:386px;width:168px;height:30px;display:flex;flex-direction:column;justify-content:flex-end;text-align:center;font-size:20px;font-weight:400;color:#000;line-height:24px;padding:0px 2px 1px 5px;box-sizing:border-box;white-space:nowrap;"><div>10</div></div>
<div style="position:absolute;left:595px;top:418px;width:168px;height:30px;display:flex;flex-direction:column;justify-content:flex-end;text-align:center;font-size:20px;font-weight:400;color:#000;line-height:24px;padding:0px 2px 1px 5px;box-sizing:border-box;white-space:nowrap;"><div>20</div></div>
<div style="position:absolute;left:595px;top:450px;width:168px;height:30px;display:flex;flex-direction:column;justify-content:flex-end;text-align:center;font-size:20px;font-weight:400;color:#000;line-height:24px;padding:0px 2px 1px 5px;box-sizing:border-box;white-space:nowrap;"><div>30</div></div>
<div style="position:absolute;left:595px;top:482px;width:168px;height:30px;display:flex;flex-direction:column;justify-content:flex-end;text-align:center;font-size:20px;font-weight:400;color:#000;line-height:24px;padding:0px 2px 1px 5px;box-sizing:border-box;white-space:nowrap;"><div>50</div></div>
<div style="position:absolute;left:595px;top:514px;width:168px;height:30px;display:flex;flex-direction:column;justify-content:flex-end;text-align:center;font-size:20px;font-weight:700;color:#000;line-height:24px;padding:0px 2px 1px 5px;box-sizing:border-box;white-space:nowrap;"><div>32</div></div>
<div style="position:absolute;left:765px;top:386px;width:123px;height:126px;display:flex;flex-direction:column;justify-content:flex-end;text-align:center;font-size:16px;font-weight:700;color:#000;line-height:19.5px;padding:0px 4px 2px 6px;box-sizing:border-box;white-space:nowrap;"><div>время набора<br>деталей на<br>покупку<br>спутника</div></div>
<div style="position:absolute;left:890px;top:386px;width:181px;height:126px;display:flex;flex-direction:column;justify-content:flex-end;text-align:center;font-size:16px;font-weight:700;color:#000;line-height:19.5px;padding:0px 4px 2px 6px;box-sizing:border-box;white-space:nowrap;"><div>время набора<br>деталей на покупку<br>спутника<br>+ время стройки всех<br>производств</div></div>
<div style="position:absolute;left:765px;top:514px;width:123px;height:30px;display:flex;flex-direction:column;justify-content:flex-end;text-align:center;font-size:20px;font-weight:700;color:#000;line-height:24px;padding:0px 2px 1px 5px;box-sizing:border-box;white-space:nowrap;"><div>28:09:59</div></div>
<div style="position:absolute;left:890px;top:514px;width:181px;height:30px;display:flex;flex-direction:column;justify-content:flex-end;text-align:center;font-size:20px;font-weight:700;color:#000;line-height:24px;padding:0px 2px 1px 5px;box-sizing:border-box;white-space:nowrap;"><div>136:13:12</div></div>
<div style="position:absolute;left:47px;top:546px;width:400px;height:30px;display:flex;flex-direction:column;justify-content:flex-end;text-align:right;font-size:20px;font-weight:700;color:#000;line-height:24px;padding:0px 3px 1px 4px;box-sizing:border-box;white-space:nowrap;"><div>если собирать на спутник фабрикой:</div></div>
<div style="position:absolute;left:449px;top:546px;width:144px;height:30px;display:flex;flex-direction:column;justify-content:flex-end;text-align:right;font-size:20px;font-weight:700;color:#ff0000;line-height:24px;padding:0px 3px 1px 4px;box-sizing:border-box;white-space:nowrap;"><div>12:22:48</div></div>
<div style="position:absolute;left:595px;top:546px;width:168px;height:30px;display:flex;flex-direction:column;justify-content:flex-end;text-align:center;font-size:20px;font-weight:700;color:#ff0000;line-height:24px;padding:0px 2px 1px 5px;box-sizing:border-box;white-space:nowrap;"><div>38</div></div>
<div style="position:absolute;left:765px;top:546px;width:123px;height:30px;display:flex;flex-direction:column;justify-content:flex-end;text-align:center;font-size:20px;font-weight:700;color:#ff0000;line-height:24px;padding:0px 2px 1px 5px;box-sizing:border-box;white-space:nowrap;"><div>106:45:20</div></div>
<div style="position:absolute;left:890px;top:546px;width:181px;height:30px;display:flex;flex-direction:column;justify-content:flex-end;text-align:center;font-size:20px;font-weight:700;color:#ff0000;line-height:24px;padding:0px 2px 1px 5px;box-sizing:border-box;white-space:nowrap;"><div>122:35:45</div></div>
<div style="position:absolute;left:449px;top:578px;width:622px;height:30px;display:flex;flex-direction:column;justify-content:flex-end;text-align:left;font-size:18px;font-weight:700;color:#ff00ff;line-height:22px;padding:0px 5px 2px 5px;box-sizing:border-box;white-space:nowrap;"><div>время очень минимальное, если вы по будильнику будете строить)</div></div>
<div style="position:absolute;left:103px;top:706px;width:785px;height:30px;display:flex;flex-direction:column;justify-content:flex-end;text-align:left;font-size:20px;font-weight:700;color:#000;line-height:24px;padding:0px 3px 1px 4px;box-sizing:border-box;white-space:nowrap;"><div>Узнай сколько сколько применино скидок</div></div>
<div style="position:absolute;left:103px;top:738px;width:968px;height:30px;display:flex;flex-direction:column;justify-content:flex-end;text-align:left;font-size:20px;font-weight:700;color:#000;line-height:24px;padding:0px 3px 1px 4px;box-sizing:border-box;white-space:nowrap;"><div>стоимость модов в зависимости от колличества дисконтов и номера спутника</div></div>
<div style="position:absolute;left:211px;top:770px;width:99px;height:30px;display:flex;flex-direction:column;justify-content:flex-end;text-align:center;font-size:20px;font-weight:400;color:#000;line-height:24px;padding:0px 2px 1px 5px;box-sizing:border-box;white-space:nowrap;"><div>кузница</div></div>
<div style="position:absolute;left:211px;top:802px;width:99px;height:30px;display:flex;flex-direction:column;justify-content:flex-end;text-align:center;font-size:20px;font-weight:700;color:#000;line-height:24px;padding:0px 2px 1px 5px;box-sizing:border-box;white-space:nowrap;"><div>м10</div></div>
<div style="position:absolute;left:312px;top:770px;width:135px;height:30px;display:flex;flex-direction:column;justify-content:flex-end;text-align:center;font-size:20px;font-weight:400;color:#000;line-height:24px;padding:0px 2px 1px 5px;box-sizing:border-box;white-space:nowrap;"><div>конвейер</div></div>
<div style="position:absolute;left:312px;top:802px;width:135px;height:30px;display:flex;flex-direction:column;justify-content:flex-end;text-align:center;font-size:20px;font-weight:700;color:#000;line-height:24px;padding:0px 2px 1px 5px;box-sizing:border-box;white-space:nowrap;"><div>м20</div></div>
<div style="position:absolute;left:449px;top:770px;width:144px;height:30px;display:flex;flex-direction:column;justify-content:flex-end;text-align:center;font-size:20px;font-weight:400;color:#000;line-height:24px;padding:0px 2px 1px 5px;box-sizing:border-box;white-space:nowrap;"><div>ЭВМ</div></div>
<div style="position:absolute;left:449px;top:802px;width:144px;height:30px;display:flex;flex-direction:column;justify-content:flex-end;text-align:center;font-size:20px;font-weight:700;color:#000;line-height:24px;padding:0px 2px 1px 5px;box-sizing:border-box;white-space:nowrap;"><div>м30</div></div>
<div style="position:absolute;left:595px;top:770px;width:168px;height:30px;display:flex;flex-direction:column;justify-content:flex-end;text-align:center;font-size:20px;font-weight:400;color:#000;line-height:24px;padding:0px 2px 1px 5px;box-sizing:border-box;white-space:nowrap;"><div>фабрика</div></div>
<div style="position:absolute;left:595px;top:802px;width:168px;height:30px;display:flex;flex-direction:column;justify-content:flex-end;text-align:center;font-size:20px;font-weight:700;color:#000;line-height:24px;padding:0px 2px 1px 5px;box-sizing:border-box;white-space:nowrap;"><div>м50</div></div>
<div style="position:absolute;left:765px;top:770px;width:123px;height:30px;display:flex;flex-direction:column;justify-content:flex-end;text-align:center;font-size:20px;font-weight:400;color:#000;line-height:24px;padding:0px 2px 1px 5px;box-sizing:border-box;white-space:nowrap;"><div>реактор</div></div>
<div style="position:absolute;left:765px;top:802px;width:123px;height:30px;display:flex;flex-direction:column;justify-content:flex-end;text-align:center;font-size:20px;font-weight:700;color:#000;line-height:24px;padding:0px 2px 1px 5px;box-sizing:border-box;white-space:nowrap;"><div>м10</div></div>
<div style="position:absolute;left:1141px;top:326px;width:304px;height:509px;display:flex;flex-direction:column;justify-content:flex-start;text-align:left;font-size:20px;font-weight:400;color:#000;line-height:24px;padding:4px 5px 0px 5px;box-sizing:border-box;white-space:nowrap;"><div><span style="color:#ff0000;font-weight:700">Калькулятором<br>пользоваться может только<br>один пользователь<br>одновременно!</span><br><br>Если пользуйтесь сейчас<br>напишите в выделенной<br>желтой области выше ваш ник.<br><br>Если поле пусто значит форма<br>свободна.<br><br>Если закончили пользоватья<br>удалите ник в желтом поле!<br><br><span style="color:#ff0000;font-weight:700">Менять можно только<br>фильтры выделенные<br>оранжевым цветом, это<br>ячейки B2, C2, D2 и F2!</span></div></div>
<div style="position:absolute;left:1577px;top:386px;width:70px;height:30px;display:flex;flex-direction:column;justify-content:flex-end;text-align:center;font-size:20px;font-weight:700;color:#000;line-height:24px;padding:0px 2px 1px 5px;box-sizing:border-box;white-space:nowrap;"><div>30</div></div>
<div style="position:absolute;left:1649px;top:386px;width:84px;height:30px;display:flex;flex-direction:column;justify-content:flex-end;text-align:center;font-size:20px;font-weight:400;color:#ff6d01;line-height:24px;padding:0px 2px 1px 5px;box-sizing:border-box;white-space:nowrap;"><div>50</div></div>
<div style="position:absolute;left:1735px;top:386px;width:108px;height:30px;display:flex;flex-direction:column;justify-content:flex-end;text-align:center;font-size:20px;font-weight:400;color:#000;line-height:24px;padding:0px 2px 1px 5px;box-sizing:border-box;white-space:nowrap;"><div>0:27:59</div></div>
<div style="position:absolute;left:1577px;top:418px;width:70px;height:30px;display:flex;flex-direction:column;justify-content:flex-end;text-align:center;font-size:20px;font-weight:700;color:#000;line-height:24px;padding:0px 2px 1px 5px;box-sizing:border-box;white-space:nowrap;"><div>31</div></div>
<div style="position:absolute;left:1649px;top:418px;width:84px;height:30px;display:flex;flex-direction:column;justify-content:flex-end;text-align:center;font-size:20px;font-weight:400;color:#ff6d01;line-height:24px;padding:0px 2px 1px 5px;box-sizing:border-box;white-space:nowrap;"><div>50</div></div>
<div style="position:absolute;left:1735px;top:418px;width:108px;height:30px;display:flex;flex-direction:column;justify-content:flex-end;text-align:center;font-size:20px;font-weight:400;color:#000;line-height:24px;padding:0px 2px 1px 5px;box-sizing:border-box;white-space:nowrap;"><div>0:33:43</div></div>
<div style="position:absolute;left:1577px;top:450px;width:70px;height:30px;display:flex;flex-direction:column;justify-content:flex-end;text-align:center;font-size:20px;font-weight:700;color:#000;line-height:24px;padding:0px 2px 1px 5px;box-sizing:border-box;white-space:nowrap;"><div>32</div></div>
<div style="position:absolute;left:1649px;top:450px;width:84px;height:30px;display:flex;flex-direction:column;justify-content:flex-end;text-align:center;font-size:20px;font-weight:400;color:#ff6d01;line-height:24px;padding:0px 2px 1px 5px;box-sizing:border-box;white-space:nowrap;"><div>50</div></div>
<div style="position:absolute;left:1735px;top:450px;width:108px;height:30px;display:flex;flex-direction:column;justify-content:flex-end;text-align:center;font-size:20px;font-weight:400;color:#000;line-height:24px;padding:0px 2px 1px 5px;box-sizing:border-box;white-space:nowrap;"><div>0:40:39</div></div>
<div style="position:absolute;left:1577px;top:482px;width:70px;height:30px;display:flex;flex-direction:column;justify-content:flex-end;text-align:center;font-size:20px;font-weight:700;color:#000;line-height:24px;padding:0px 2px 1px 5px;box-sizing:border-box;white-space:nowrap;"><div>33</div></div>
<div style="position:absolute;left:1649px;top:482px;width:84px;height:30px;display:flex;flex-direction:column;justify-content:flex-end;text-align:center;font-size:20px;font-weight:400;color:#ff6d01;line-height:24px;padding:0px 2px 1px 5px;box-sizing:border-box;white-space:nowrap;"><div>50</div></div>
<div style="position:absolute;left:1735px;top:482px;width:108px;height:30px;display:flex;flex-direction:column;justify-content:flex-end;text-align:center;font-size:20px;font-weight:400;color:#000;line-height:24px;padding:0px 2px 1px 5px;box-sizing:border-box;white-space:nowrap;"><div>0:49:04</div></div>
<div style="position:absolute;left:1577px;top:514px;width:70px;height:30px;display:flex;flex-direction:column;justify-content:flex-end;text-align:center;font-size:20px;font-weight:700;color:#000;line-height:24px;padding:0px 2px 1px 5px;box-sizing:border-box;white-space:nowrap;"><div>34</div></div>
<div style="position:absolute;left:1649px;top:514px;width:84px;height:30px;display:flex;flex-direction:column;justify-content:flex-end;text-align:center;font-size:20px;font-weight:400;color:#ff6d01;line-height:24px;padding:0px 2px 1px 5px;box-sizing:border-box;white-space:nowrap;"><div>50</div></div>
<div style="position:absolute;left:1735px;top:514px;width:108px;height:30px;display:flex;flex-direction:column;justify-content:flex-end;text-align:center;font-size:20px;font-weight:400;color:#000;line-height:24px;padding:0px 2px 1px 5px;box-sizing:border-box;white-space:nowrap;"><div>0:59:15</div></div>
<div style="position:absolute;left:1577px;top:546px;width:70px;height:30px;display:flex;flex-direction:column;justify-content:flex-end;text-align:center;font-size:20px;font-weight:700;color:#000;line-height:24px;padding:0px 2px 1px 5px;box-sizing:border-box;white-space:nowrap;"><div>35</div></div>
<div style="position:absolute;left:1649px;top:546px;width:84px;height:30px;display:flex;flex-direction:column;justify-content:flex-end;text-align:center;font-size:20px;font-weight:400;color:#ff6d01;line-height:24px;padding:0px 2px 1px 5px;box-sizing:border-box;white-space:nowrap;"><div>50</div></div>
<div style="position:absolute;left:1735px;top:546px;width:108px;height:30px;display:flex;flex-direction:column;justify-content:flex-end;text-align:center;font-size:20px;font-weight:400;color:#000;line-height:24px;padding:0px 2px 1px 5px;box-sizing:border-box;white-space:nowrap;"><div>1:11:36</div></div>
<div style="position:absolute;left:1577px;top:578px;width:70px;height:30px;display:flex;flex-direction:column;justify-content:flex-end;text-align:center;font-size:20px;font-weight:700;color:#000;line-height:24px;padding:0px 2px 1px 5px;box-sizing:border-box;white-space:nowrap;"><div>36</div></div>
<div style="position:absolute;left:1649px;top:578px;width:84px;height:30px;display:flex;flex-direction:column;justify-content:flex-end;text-align:center;font-size:20px;font-weight:400;color:#ff6d01;line-height:24px;padding:0px 2px 1px 5px;box-sizing:border-box;white-space:nowrap;"><div>50</div></div>
<div style="position:absolute;left:1735px;top:578px;width:108px;height:30px;display:flex;flex-direction:column;justify-content:flex-end;text-align:center;font-size:20px;font-weight:400;color:#000;line-height:24px;padding:0px 2px 1px 5px;box-sizing:border-box;white-space:nowrap;"><div>1:26:36</div></div>
<div style="position:absolute;left:1577px;top:610px;width:70px;height:30px;display:flex;flex-direction:column;justify-content:flex-end;text-align:center;font-size:20px;font-weight:700;color:#000;line-height:24px;padding:0px 2px 1px 5px;box-sizing:border-box;white-space:nowrap;"><div>37</div></div>
<div style="position:absolute;left:1649px;top:610px;width:84px;height:30px;display:flex;flex-direction:column;justify-content:flex-end;text-align:center;font-size:20px;font-weight:400;color:#ff6d01;line-height:24px;padding:0px 2px 1px 5px;box-sizing:border-box;white-space:nowrap;"><div>50</div></div>
<div style="position:absolute;left:1735px;top:610px;width:108px;height:30px;display:flex;flex-direction:column;justify-content:flex-end;text-align:center;font-size:20px;font-weight:400;color:#000;line-height:24px;padding:0px 2px 1px 5px;box-sizing:border-box;white-space:nowrap;"><div>1:44:47</div></div>
<div style="position:absolute;left:1577px;top:642px;width:70px;height:30px;display:flex;flex-direction:column;justify-content:flex-end;text-align:center;font-size:20px;font-weight:700;color:#000;line-height:24px;padding:0px 2px 1px 5px;box-sizing:border-box;white-space:nowrap;"><div>38</div></div>
<div style="position:absolute;left:1649px;top:642px;width:84px;height:30px;display:flex;flex-direction:column;justify-content:flex-end;text-align:center;font-size:20px;font-weight:400;color:#ff6d01;line-height:24px;padding:0px 2px 1px 5px;box-sizing:border-box;white-space:nowrap;"><div>50</div></div>
<div style="position:absolute;left:1735px;top:642px;width:108px;height:30px;display:flex;flex-direction:column;justify-content:flex-end;text-align:center;font-size:20px;font-weight:400;color:#000;line-height:24px;padding:0px 2px 1px 5px;box-sizing:border-box;white-space:nowrap;"><div>2:06:51</div></div>
<div style="position:absolute;left:1577px;top:674px;width:70px;height:30px;display:flex;flex-direction:column;justify-content:flex-end;text-align:center;font-size:20px;font-weight:700;color:#000;line-height:24px;padding:0px 2px 1px 5px;box-sizing:border-box;white-space:nowrap;"><div>39</div></div>
<div style="position:absolute;left:1649px;top:674px;width:84px;height:30px;display:flex;flex-direction:column;justify-content:flex-end;text-align:center;font-size:20px;font-weight:400;color:#ff6d01;line-height:24px;padding:0px 2px 1px 5px;box-sizing:border-box;white-space:nowrap;"><div>50</div></div>
<div style="position:absolute;left:1735px;top:674px;width:108px;height:30px;display:flex;flex-direction:column;justify-content:flex-end;text-align:center;font-size:20px;font-weight:400;color:#000;line-height:24px;padding:0px 2px 1px 5px;box-sizing:border-box;white-space:nowrap;"><div>2:33:41</div></div>
<div style="position:absolute;left:1577px;top:706px;width:70px;height:30px;display:flex;flex-direction:column;justify-content:flex-end;text-align:center;font-size:20px;font-weight:700;color:#000;line-height:24px;padding:0px 2px 1px 5px;box-sizing:border-box;white-space:nowrap;"><div>40</div></div>
<div style="position:absolute;left:1649px;top:706px;width:84px;height:30px;display:flex;flex-direction:column;justify-content:flex-end;text-align:center;font-size:20px;font-weight:400;color:#ff6d01;line-height:24px;padding:0px 2px 1px 5px;box-sizing:border-box;white-space:nowrap;"><div>50</div></div>
<div style="position:absolute;left:1735px;top:706px;width:108px;height:30px;display:flex;flex-direction:column;justify-content:flex-end;text-align:center;font-size:20px;font-weight:400;color:#000;line-height:24px;padding:0px 2px 1px 5px;box-sizing:border-box;white-space:nowrap;"><div>3:06:16</div></div>
<div style="position:absolute;left:1577px;top:738px;width:70px;height:30px;display:flex;flex-direction:column;justify-content:flex-end;text-align:center;font-size:20px;font-weight:700;color:#000;line-height:24px;padding:0px 2px 1px 5px;box-sizing:border-box;white-space:nowrap;"><div>41</div></div>
<div style="position:absolute;left:1649px;top:738px;width:84px;height:30px;display:flex;flex-direction:column;justify-content:flex-end;text-align:center;font-size:20px;font-weight:400;color:#ff6d01;line-height:24px;padding:0px 2px 1px 5px;box-sizing:border-box;white-space:nowrap;"><div>50</div></div>
<div style="position:absolute;left:1735px;top:738px;width:108px;height:30px;display:flex;flex-direction:column;justify-content:flex-end;text-align:center;font-size:20px;font-weight:400;color:#000;line-height:24px;padding:0px 2px 1px 5px;box-sizing:border-box;white-space:nowrap;"><div>3:45:53</div></div>
<div style="position:absolute;left:1577px;top:770px;width:70px;height:30px;display:flex;flex-direction:column;justify-content:flex-end;text-align:center;font-size:20px;font-weight:700;color:#000;line-height:24px;padding:0px 2px 1px 5px;box-sizing:border-box;white-space:nowrap;"><div>42</div></div>
<div style="position:absolute;left:1649px;top:770px;width:84px;height:30px;display:flex;flex-direction:column;justify-content:flex-end;text-align:center;font-size:20px;font-weight:400;color:#ff6d01;line-height:24px;padding:0px 2px 1px 5px;box-sizing:border-box;white-space:nowrap;"><div>50</div></div>
<div style="position:absolute;left:1735px;top:770px;width:108px;height:30px;display:flex;flex-direction:column;justify-content:flex-end;text-align:center;font-size:20px;font-weight:400;color:#000;line-height:24px;padding:0px 2px 1px 5px;box-sizing:border-box;white-space:nowrap;"><div>4:34:03</div></div>
<div style="position:absolute;left:1577px;top:802px;width:70px;height:30px;display:flex;flex-direction:column;justify-content:flex-end;text-align:center;font-size:20px;font-weight:700;color:#000;line-height:24px;padding:0px 2px 1px 5px;box-sizing:border-box;white-space:nowrap;"><div>43</div></div>
<div style="position:absolute;left:1649px;top:802px;width:84px;height:30px;display:flex;flex-direction:column;justify-content:flex-end;text-align:center;font-size:20px;font-weight:400;color:#ff6d01;line-height:24px;padding:0px 2px 1px 5px;box-sizing:border-box;white-space:nowrap;"><div>50</div></div>
<div style="position:absolute;left:1735px;top:802px;width:108px;height:30px;display:flex;flex-direction:column;justify-content:flex-end;text-align:center;font-size:20px;font-weight:400;color:#000;line-height:24px;padding:0px 2px 1px 5px;box-sizing:border-box;white-space:nowrap;"><div>5:32:39</div></div>
<div style="position:absolute;left:1846px;top:240px;width:21px;height:595px;overflow:hidden;font-size:20px;color:#ff0000;line-height:24px;white-space:nowrap">
<div style="position:absolute;left:11.6px;top:182px;font-weight:700">м</div>
<div style="position:absolute;left:9.6px;top:206px;font-weight:700">ст</div>
<div style="position:absolute;left:6.5px;top:230px;font-weight:700">ф</div>
<div style="position:absolute;left:16.8px;top:278px;font-weight:700">с</div>
<div style="position:absolute;left:18px;top:336.8px;font-weight:400">-</div>
<div style="position:absolute;left:14.2px;top:389.6px;font-weight:400">о</div>
<div style="position:absolute;left:10.2px;top:413.6px;font-weight:400">у</div>
</div>
<div style="position:absolute;left:102px;top:293px;width:108px;height:33px;border:3px solid #1a73e8"></div>
<div style="position:absolute;left:204px;top:319px;width:13px;height:13px;border-radius:50%;background:#1a5fd6;border:1.5px solid #fff"></div>
<div style="position:absolute;left:1868px;top:162px;width:9px;height:693px;background:#ffffff;"></div>
<div style="position:absolute;left:1868px;top:203px;width:1px;height:652px;background:#e3e3e3;"></div>
<div style="position:absolute;left:1869px;top:204px;width:8px;height:34px;background:#f8f9fa;"></div>
<div style="position:absolute;left:1870px;top:241px;width:14px;height:62px;border-radius:7px;background:#dadce0"></div>
<div style="position:absolute;left:1869px;top:789px;width:8px;height:47px;background:#f8f9fa;"></div>
<svg style="left:1871px;top:795px" width="8" height="8" viewBox="0 0 8 8"><path d="M0 7 L6 0 L12 7 Z" fill="#9aa0a6"/></svg>
<div style="position:absolute;left:1869px;top:812px;width:8px;height:1px;background:#8ab4f8;"></div>
<svg style="left:1871px;top:821px" width="8" height="8" viewBox="0 0 8 8"><path d="M0 0 L6 7 L12 0 Z" fill="#9aa0a6"/></svg>
<div style="position:absolute;left:0px;top:836px;width:1877px;height:19px;background:#f8f9fa;"></div>
<div style="position:absolute;left:0px;top:835px;width:1877px;height:1px;background:#eceef0;"></div>
<div style="position:absolute;left:45px;top:835px;width:1px;height:19px;background:#e3e3e3;"></div>
<div style="position:absolute;left:48px;top:839px;width:1177px;height:14px;border-radius:7px;background:#dadce0"></div>
<div style="position:absolute;left:1821px;top:835px;width:1px;height:19px;background:#e8eaed;"></div>
<div style="position:absolute;left:1845px;top:835px;width:1px;height:19px;background:#e8eaed;"></div>
<div style="position:absolute;left:1867px;top:835px;width:1px;height:19px;background:#e8eaed;"></div>
<svg style="left:1829px;top:840px" width="6" height="9" viewBox="0 0 6 9"><path d="M6 0 V9 L0 4.5 Z" fill="#a3a7ab"/></svg>
<svg style="left:1854px;top:840px" width="6" height="9" viewBox="0 0 6 9"><path d="M0 0 V9 L6 4.5 Z" fill="#a3a7ab"/></svg>
<div style="position:absolute;left:0px;top:854px;width:1877px;height:13px;background:#f9fbfd;"></div>
<div style="position:absolute;left:0px;top:854px;width:1877px;height:1px;background:#e5e7ea;"></div>
<div style="position:absolute;left:175px;top:856px;width:202px;height:11px;background:#e1e9f7;"></div>
</body></html>
